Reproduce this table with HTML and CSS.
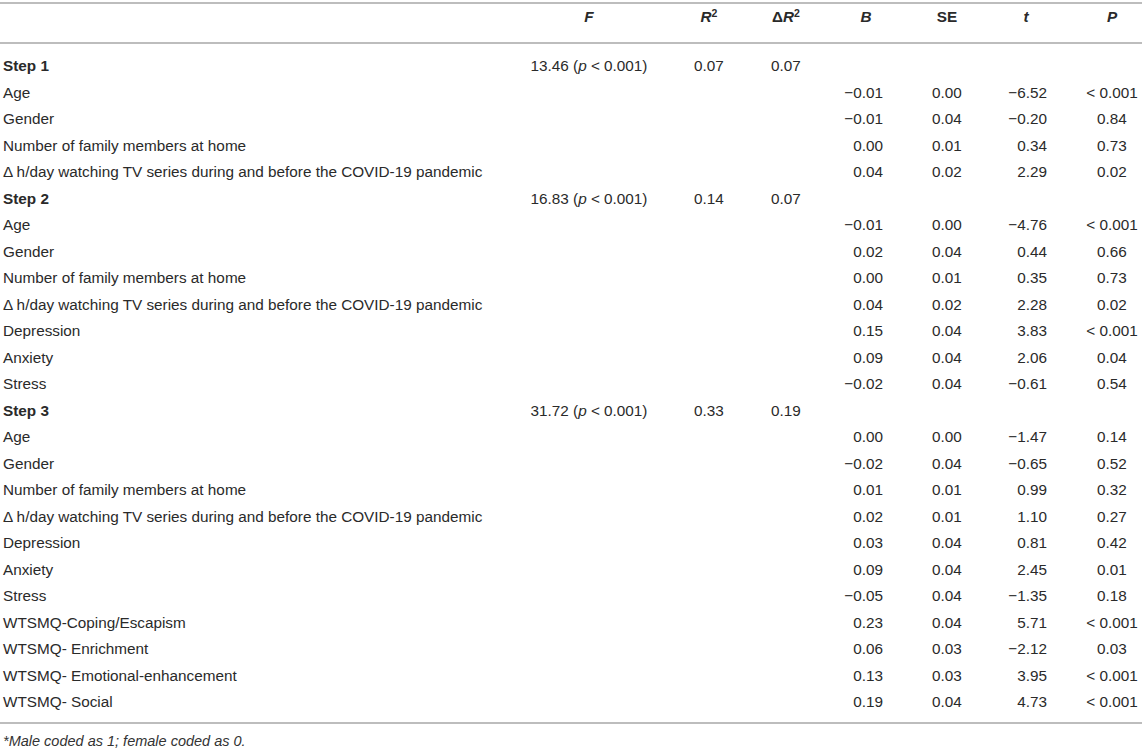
FILE: index.html
```html
<!DOCTYPE html>
<html lang="en">
<head>
<meta charset="utf-8">
<title>Hierarchical regression</title>
<link rel="stylesheet" href="styles.css">
</head>
<body>
<table class="reg">
  <colgroup>
    <col class="w-label">
    <col class="w-f">
    <col class="w-r2">
    <col class="w-dr2">
    <col class="w-b">
    <col class="w-se">
    <col class="w-t">
    <col class="w-p">
  </colgroup>
  <thead>
    <tr>
      <th></th>
      <th class="h"><i>F</i></th>
      <th class="h"><i>R</i><sup>2</sup></th>
      <th class="h">Δ<i>R</i><sup>2</sup></th>
      <th class="h"><i>B</i></th>
      <th class="h">SE</th>
      <th class="h"><i>t</i></th>
      <th class="h"><i>P</i></th>
    </tr>
  </thead>
  <tbody>
    <tr class="step first"><td class="lab">Step 1</td><td class="c">13.46 (<i>p</i> &lt; 0.001)</td><td class="c">0.07</td><td class="c">0.07</td><td></td><td></td><td></td><td></td></tr>
    <tr><td class="lab">Age</td><td></td><td></td><td></td><td class="b">−0.01</td><td class="c">0.00</td><td class="t">−6.52</td><td class="c">&lt; 0.001</td></tr>
    <tr><td class="lab">Gender</td><td></td><td></td><td></td><td class="b">−0.01</td><td class="c">0.04</td><td class="t">−0.20</td><td class="c">0.84</td></tr>
    <tr><td class="lab">Number of family members at home</td><td></td><td></td><td></td><td class="b">0.00</td><td class="c">0.01</td><td class="t">0.34</td><td class="c">0.73</td></tr>
    <tr><td class="lab">Δ h/day watching TV series during and before the COVID-19 pandemic</td><td></td><td></td><td></td><td class="b">0.04</td><td class="c">0.02</td><td class="t">2.29</td><td class="c">0.02</td></tr>
    <tr class="step"><td class="lab">Step 2</td><td class="c">16.83 (<i>p</i> &lt; 0.001)</td><td class="c">0.14</td><td class="c">0.07</td><td></td><td></td><td></td><td></td></tr>
    <tr><td class="lab">Age</td><td></td><td></td><td></td><td class="b">−0.01</td><td class="c">0.00</td><td class="t">−4.76</td><td class="c">&lt; 0.001</td></tr>
    <tr><td class="lab">Gender</td><td></td><td></td><td></td><td class="b">0.02</td><td class="c">0.04</td><td class="t">0.44</td><td class="c">0.66</td></tr>
    <tr><td class="lab">Number of family members at home</td><td></td><td></td><td></td><td class="b">0.00</td><td class="c">0.01</td><td class="t">0.35</td><td class="c">0.73</td></tr>
    <tr><td class="lab">Δ h/day watching TV series during and before the COVID-19 pandemic</td><td></td><td></td><td></td><td class="b">0.04</td><td class="c">0.02</td><td class="t">2.28</td><td class="c">0.02</td></tr>
    <tr><td class="lab">Depression</td><td></td><td></td><td></td><td class="b">0.15</td><td class="c">0.04</td><td class="t">3.83</td><td class="c">&lt; 0.001</td></tr>
    <tr><td class="lab">Anxiety</td><td></td><td></td><td></td><td class="b">0.09</td><td class="c">0.04</td><td class="t">2.06</td><td class="c">0.04</td></tr>
    <tr><td class="lab">Stress</td><td></td><td></td><td></td><td class="b">−0.02</td><td class="c">0.04</td><td class="t">−0.61</td><td class="c">0.54</td></tr>
    <tr class="step"><td class="lab">Step 3</td><td class="c">31.72 (<i>p</i> &lt; 0.001)</td><td class="c">0.33</td><td class="c">0.19</td><td></td><td></td><td></td><td></td></tr>
    <tr><td class="lab">Age</td><td></td><td></td><td></td><td class="b">0.00</td><td class="c">0.00</td><td class="t">−1.47</td><td class="c">0.14</td></tr>
    <tr><td class="lab">Gender</td><td></td><td></td><td></td><td class="b">−0.02</td><td class="c">0.04</td><td class="t">−0.65</td><td class="c">0.52</td></tr>
    <tr><td class="lab">Number of family members at home</td><td></td><td></td><td></td><td class="b">0.01</td><td class="c">0.01</td><td class="t">0.99</td><td class="c">0.32</td></tr>
    <tr><td class="lab">Δ h/day watching TV series during and before the COVID-19 pandemic</td><td></td><td></td><td></td><td class="b">0.02</td><td class="c">0.01</td><td class="t">1.10</td><td class="c">0.27</td></tr>
    <tr><td class="lab">Depression</td><td></td><td></td><td></td><td class="b">0.03</td><td class="c">0.04</td><td class="t">0.81</td><td class="c">0.42</td></tr>
    <tr><td class="lab">Anxiety</td><td></td><td></td><td></td><td class="b">0.09</td><td class="c">0.04</td><td class="t">2.45</td><td class="c">0.01</td></tr>
    <tr><td class="lab">Stress</td><td></td><td></td><td></td><td class="b">−0.05</td><td class="c">0.04</td><td class="t">−1.35</td><td class="c">0.18</td></tr>
    <tr><td class="lab">WTSMQ-Coping/Escapism</td><td></td><td></td><td></td><td class="b">0.23</td><td class="c">0.04</td><td class="t">5.71</td><td class="c">&lt; 0.001</td></tr>
    <tr><td class="lab">WTSMQ- Enrichment</td><td></td><td></td><td></td><td class="b">0.06</td><td class="c">0.03</td><td class="t">−2.12</td><td class="c">0.03</td></tr>
    <tr><td class="lab">WTSMQ- Emotional-enhancement</td><td></td><td></td><td></td><td class="b">0.13</td><td class="c">0.03</td><td class="t">3.95</td><td class="c">&lt; 0.001</td></tr>
    <tr class="last"><td class="lab">WTSMQ- Social</td><td></td><td></td><td></td><td class="b">0.19</td><td class="c">0.04</td><td class="t">4.73</td><td class="c">&lt; 0.001</td></tr>
  </tbody>
</table>
<p class="note">*Male coded as 1; female coded as 0.</p>
</body>
</html>
```

FILE: styles.css
```css
html, body {
  margin: 0;
  padding: 0;
  background: #ffffff;
}

body {
  font-family: "Liberation Sans", Arial, Helvetica, sans-serif;
  color: #2a2a2a;
}

.reg {
  border-collapse: collapse;
  table-layout: fixed;
  width: 1142px;
  margin-top: 2px;
  font-size: 15.3px;
}

.w-label { width: 524px; }
.w-f { width: 130px; }
.w-r2 { width: 110px; }
.w-dr2 { width: 44px; }
.w-b { width: 116px; }
.w-se { width: 46px; }
.w-t { width: 112px; }
.w-p { width: 60px; }

.reg thead th {
  border-top: 2px solid #bdbdbd;
  border-bottom: 2px solid #bdbdbd;
  padding: 3px 0 15px;
  line-height: 20px;
  vertical-align: top;
  font-weight: bold;
  text-align: center;
  white-space: nowrap;
}

.reg thead sup {
  font-size: 10.5px;
  line-height: 0;
  vertical-align: 5px;
}

.reg td {
  padding: 0;
  line-height: 26.5px;
  vertical-align: middle;
  white-space: nowrap;
}

.reg tr.first td {
  padding-top: 9px;
}

.reg tr.last td {
  padding-bottom: 6px;
  border-bottom: 2px solid #bdbdbd;
}

.lab {
  padding-left: 3px !important;
  text-align: left;
}

.step .lab {
  font-weight: bold;
}

.c {
  text-align: center;
}

.b {
  text-align: right;
  padding-right: 41px !important;
}

.t {
  text-align: right;
  padding-right: 35px !important;
}

.note {
  margin: 9px 0 0 3px;
  font-size: 14.5px;
  line-height: 16px;
  font-style: italic;
  color: #333333;
}
```
